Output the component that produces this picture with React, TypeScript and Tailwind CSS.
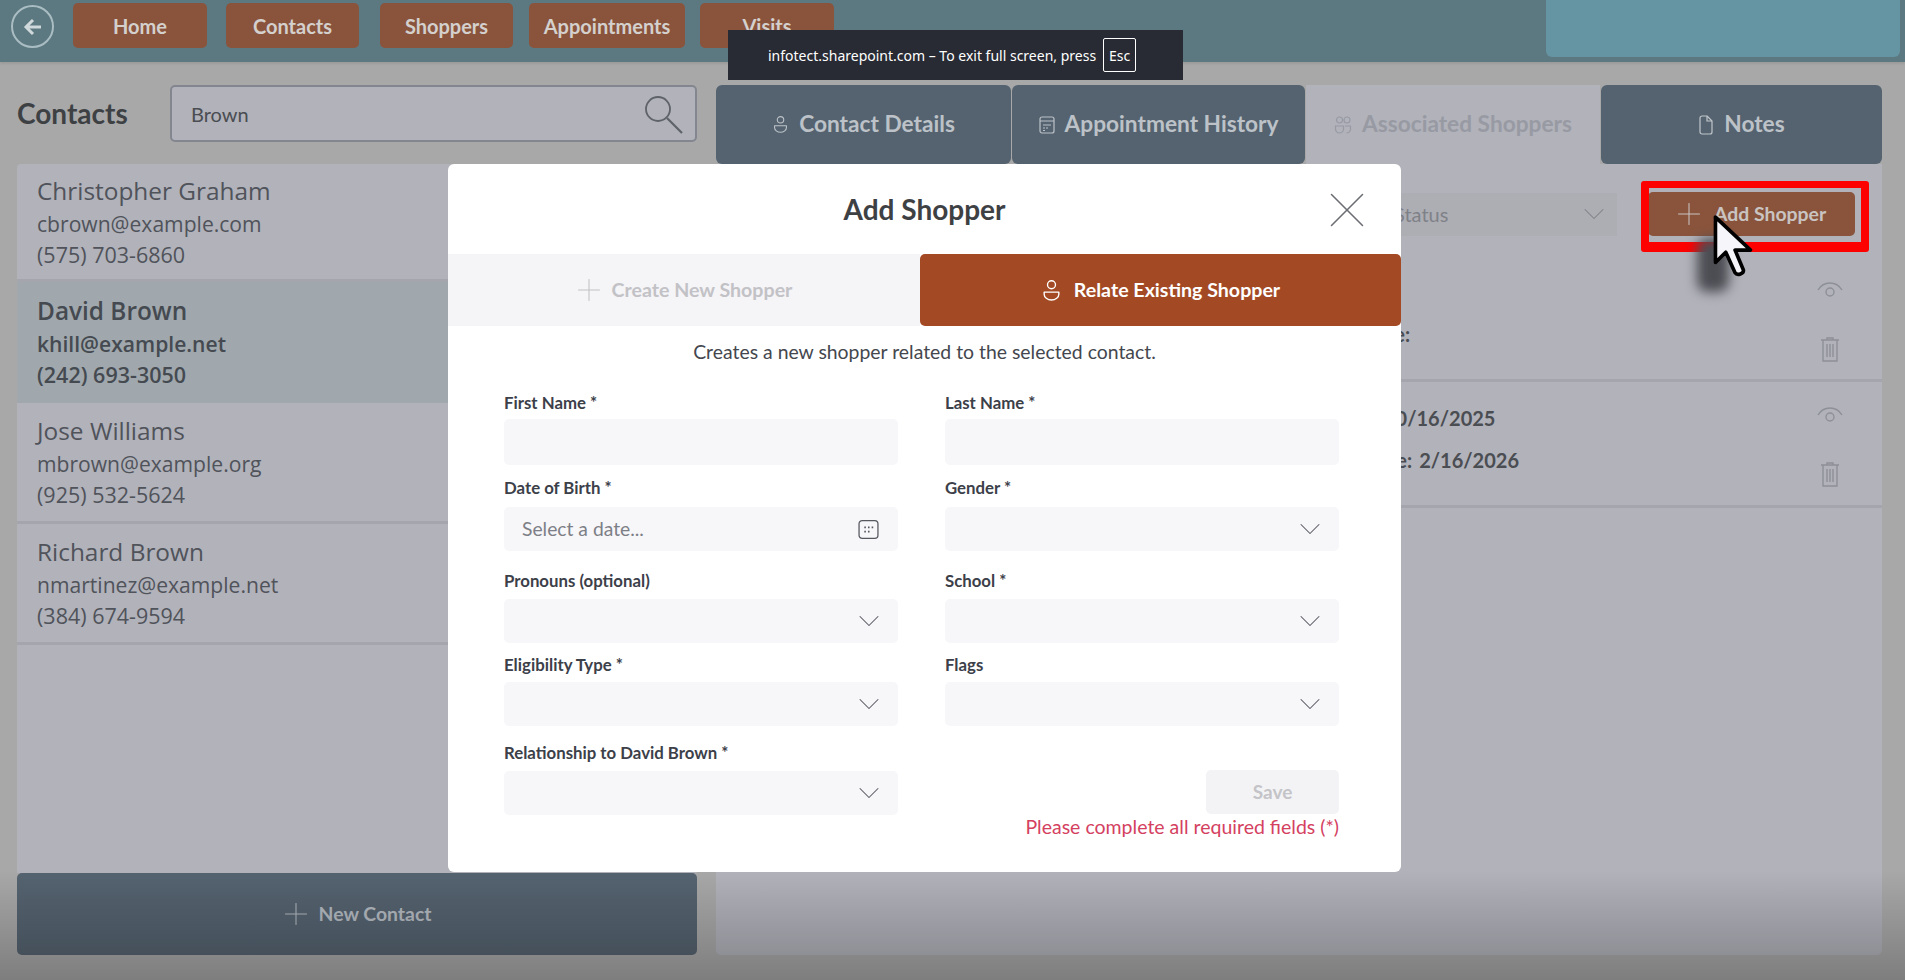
import { ChevronDown, Plus, X } from "lucide-react";

const navItems = [
  { label: "Home", cls: "w-[134px] ml-[19px]" },
  { label: "Contacts", cls: "w-[133px] ml-[19px]" },
  { label: "Shoppers", cls: "w-[133px] ml-[21px]" },
  { label: "Appointments", cls: "w-[156px] ml-[16px]" },
  { label: "Visits", cls: "w-[134px] ml-[15px]" },
];

const contacts = [
  { name: "Christopher Graham", email: "cbrown@example.com", phone: "(575) 703-6860", pad: "pt-[10px] h-[118px]" },
  { name: "David Brown", email: "khill@example.net", phone: "(242) 693-3050", pad: "pt-[12px] h-[121px]", selected: true },
  { name: "Jose Williams", email: "mbrown@example.org", phone: "(925) 532-5624", pad: "pt-[11px] h-[121px]" },
  { name: "Richard Brown", email: "nmartinez@example.net", phone: "(384) 674-9594", pad: "pt-[11px] h-[121px]" },
];

const PersonIcon = ({ className }: { className: string }) => (
  <svg viewBox="0 0 20 20" fill="none" stroke="currentColor" strokeWidth="1.3" className={className}>
    <circle cx="10" cy="4.5" r="3.8" />
    <path d="M3 11.5h14v2a7 5.6 0 0 1-14 0z" strokeLinejoin="round" />
  </svg>
);

const HistoryIcon = () => (
  <svg viewBox="0 0 16 18" fill="none" stroke="currentColor" strokeWidth="1.2" className="w-[16px] h-[18px]">
    <rect x="1" y="1" width="14" height="16" rx="2" />
    <path d="M1 5h14M4 9h8M4 12h2M7 12h2M4 14.5h2" />
  </svg>
);

const ShoppersIcon = () => (
  <svg viewBox="0 0 18 20" fill="none" stroke="currentColor" strokeWidth="1.2" className="w-[18px] h-[20px]">
    <circle cx="5.5" cy="5" r="3" />
    <circle cx="13" cy="5" r="3" />
    <path d="M1.5 11h8v3a4 4 0 0 1-8 0z" />
    <path d="M11 11h5.5v3a4 4 0 0 1-4 4" />
  </svg>
);

const PageIcon = () => (
  <svg viewBox="0 0 16 20" fill="none" stroke="#c0c5ca" strokeWidth="1.2" className="w-[16px] h-[20px]">
    <path d="M2 3a2 2 0 0 1 2-2h5l5 5v11a2 2 0 0 1-2 2H4a2 2 0 0 1-2-2z" strokeLinejoin="round" />
    <path d="M9 1v5h5" />
  </svg>
);

const EyeIcon = () => (
  <svg viewBox="0 0 26 18" fill="none" stroke="#8e9097" strokeWidth="1.4" className="w-[26px] h-[18px]">
    <path d="M1 9C4 4 8 2 13 2s9 2 12 7" />
    <circle cx="13" cy="11" r="4" />
  </svg>
);

const TrashIcon = () => (
  <svg viewBox="0 0 20 26" fill="none" stroke="#8e9097" strokeWidth="1.4" className="w-[20px] h-[26px]">
    <path d="M1 4h18M7 4V2h6v2M3 4v21h14V4M7 8v13M10 8v13M13 8v13" />
  </svg>
);

const CalendarIcon = () => (
  <svg viewBox="0 0 20 20" fill="none" stroke="#55585f" strokeWidth="1.2" className="w-[21px] h-[21px]">
    <rect x="1" y="1.5" width="18" height="17" rx="3" />
    <path d="M6 8h1.5M9.5 8H11M13 8h1.5M6 12h1.5M9.5 12H11" strokeWidth="1.8" />
  </svg>
);

const SearchIcon = () => (
  <svg viewBox="0 0 40 40" fill="none" stroke="#5f6268" strokeWidth="1.8" className="w-[40px] h-[40px]">
    <circle cx="15" cy="15" r="12" />
    <path d="M24 24l15 15" strokeWidth="2.2" />
  </svg>
);

const FieldLabel = ({ label }: { label: string }) => (
  <div className="text-[16.8px] leading-[20px] font-bold text-[#3c4049]">{label}</div>
);

const SelectBox = () => (
  <div className="h-[44px] rounded-[5px] bg-[#f7f6f9] flex items-center justify-end pr-[11px]">
    <ChevronDown className="w-[36px] h-[36px] text-[#55585f]" strokeWidth={0.7} />
  </div>
);

const App = () => {
  return (
    <div className="relative w-[1905px] h-[980px] overflow-hidden bg-[#a8a8a9] font-['Lato','Liberation_Sans',sans-serif]">
      {/* top bar */}
      <div className="h-[62px] bg-[#5c7881] flex items-start shadow-[0_2px_2px_rgba(0,0,0,0.08)]">
        <div className="ml-[11px] mt-[5px] w-[43px] h-[43px] rounded-full border-2 border-[#a9bdc3] flex items-center justify-center">
          <svg viewBox="0 0 20 20" className="w-[20px] h-[20px]" fill="none" stroke="#cfd8da" strokeWidth="3">
            <path d="M18 10H4M10 3l-7 7 7 7" />
          </svg>
        </div>
        <div className="flex mt-[3px]">
          {navItems.map((item) => (
            <div
              key={item.label}
              className={`${item.cls} h-[45px] rounded-[5px] bg-[#8a543c] text-[#d4d0cd] text-[20px] font-bold flex items-center justify-center`}
            >
              {item.label}
            </div>
          ))}
        </div>
        <div className="ml-auto mr-[5px] w-[354px] h-[57px] rounded-b-[6px] bg-[#6594a2]" />
      </div>

      {/* main */}
      <div className="flex pl-[17px] pt-[23px] gap-[19px]">
        <div className="w-[680px]">
          <div className="h-[57px] flex items-center">
            <h1 className="w-[153px] text-[28px] font-bold text-[#3e4144] -mt-[2px]">Contacts</h1>
            <div className="w-[527px] h-[57px] rounded-[5px] border-2 border-[#83858f] bg-[#b1b2ba] flex items-center justify-between pl-[19px] pr-[12px] text-[20px] text-[#4a4d52]">
              <span>Brown</span>
              <SearchIcon />
            </div>
          </div>
          <div className="mt-[22px] h-[709px] rounded-t-[4px] bg-[#b1b2ba] font-['Open_Sans','Liberation_Sans',sans-serif]">
            {contacts.map((c) => (
              <div
                key={c.name}
                className={`${c.pad} pl-[20px] border-b-[3px] ${c.selected ? "bg-[#a0a8ad] border-[#a0a8ad] text-[#454a51] font-semibold" : "border-[#a4a5ad] text-[#50535a]"}`}
              >
                <div className="text-[24.4px] leading-[33px]">{c.name}</div>
                <div className="text-[21.1px] leading-[30px] mt-[2px]">{c.email}</div>
                <div className="text-[21.5px] leading-[30px] mt-[1px]">{c.phone}</div>
              </div>
            ))}
          </div>
          <div className="h-[82px] rounded-[5px] bg-[#556370] flex items-center justify-center gap-[5px] pr-[5px] text-[19.4px] font-bold text-[#b4bac0]">
            <Plus className="w-[36px] h-[36px]" strokeWidth={0.7} />
            New Contact
          </div>
        </div>

        <div className="w-[1166px]">
          <div className="flex h-[79px] gap-[1px] text-[22.7px] font-bold">
            <div className="w-[295px] rounded-[6px] bg-[#556370] text-[#bcc2c7] flex items-center justify-center gap-[10px]">
              <PersonIcon className="w-[17px] h-[17px]" />
              Contact Details
            </div>
            <div className="w-[293px] rounded-[6px] bg-[#556370] text-[#bcc2c7] flex items-center justify-center gap-[10px]">
              <HistoryIcon />
              Appointment History
            </div>
            <div className="w-[294px] bg-[#b1b2ba] text-[#989aa3] flex items-center justify-center gap-[10px]">
              <ShoppersIcon />
              Associated Shoppers
            </div>
            <div className="w-[281px] rounded-[6px] bg-[#556370] text-[#bcc2c7] flex items-center justify-center gap-[10px]">
              <PageIcon />
              Notes
            </div>
          </div>
          <div className="h-[791px] rounded-b-[5px] bg-[#b1b2ba]">
            {/* first shopper row, holds filter + add button */}
            <div className="h-[218px] border-b-[3px] border-[#a4a5ad] relative">
              <div className="flex pt-[28px] items-center">
                <div className="ml-[659px] w-[242px] h-[43px] bg-[#adaeb4] flex items-center justify-between pl-[19px] pr-[5px] text-[20px] text-[#7f8188]">
                  <span>Status</span>
                  <ChevronDown className="w-[36px] h-[36px]" strokeWidth={0.7} />
                </div>
                <div className="ml-[31px] w-[207px] h-[44px] rounded-[5px] bg-[#8a543c] text-[#c9c4c2] text-[19.4px] font-bold flex items-center pl-[23px] gap-[7px]">
                  <Plus className="w-[36px] h-[36px]" strokeWidth={0.7} />
                  Add Shopper
                </div>
              </div>
              <div className="absolute left-[646px] top-[158px] text-[20px] font-bold leading-[24px] text-[#4a4d52]">Date:</div>
              <div className="absolute right-[39px] top-[117px] flex flex-col items-center gap-[37px]">
                <EyeIcon />
                <TrashIcon />
              </div>
            </div>
            <div className="h-[126px] border-b-[3px] border-[#a4a5ad] relative">
              <div className="absolute left-[668px] top-[24px] text-[20px] font-bold leading-[24px] text-[#4a4d52]">10/16/2025</div>
              <div className="absolute left-[648px] top-[66px] text-[20px] font-bold leading-[24px] text-[#4a4d52]">
                Date:<span className="ml-[7px]">2/16/2026</span>
              </div>
              <div className="absolute right-[39px] top-[24px] flex flex-col items-center gap-[37px]">
                <EyeIcon />
                <TrashIcon />
              </div>
            </div>
          </div>
        </div>
      </div>

      {/* video-controls shade along the bottom */}
      <div className="absolute left-0 right-0 bottom-0 h-[110px] bg-gradient-to-b from-transparent to-[rgba(0,0,0,0.25)]" />

      {/* red highlight around Add Shopper */}
      <div className="absolute left-[1641px] top-[181px] w-[228px] h-[71px] rounded-[3px] border-[8px] border-b-[10px] border-t-[7px] border-[#fd0000]" />

      {/* cursor */}
      <div className="absolute left-[1697px] top-[238px] w-[32px] h-[54px] rounded-[10px] bg-[#4c4d53] blur-[6px]" />
      <svg viewBox="0 0 40 64" className="absolute left-[1712px] top-[214px] w-[42px] h-[66px]">
        <path
          d="M3 3v44l10-10 9 20c2 3 9 1 8-3l-8-19h15z"
          fill="#f6f6fa"
          stroke="#000"
          strokeWidth="3.5"
          strokeLinejoin="round"
        />
      </svg>

      {/* modal */}
      <div className="absolute left-[448px] top-[164px] w-[953px] h-[708px] rounded-[6px] bg-white overflow-hidden">
        <div className="h-[90px] flex items-center justify-center relative">
          <h2 className="text-[28px] font-bold text-[#3e4144]">Add Shopper</h2>
          <X className="absolute right-[23px] top-[15px] w-[62px] h-[62px] text-[#6b6d72]" strokeWidth={0.6} />
        </div>
        <div className="flex h-[72px]">
          <div className="w-[472px] bg-[#f5f4f7] text-[#c2c2c6] text-[19.6px] font-bold flex items-center justify-center gap-[5px] pr-[5px]">
            <Plus className="w-[36px] h-[36px]" strokeWidth={0.7} />
            Create New Shopper
          </div>
          <div className="w-[481px] rounded-[5px] bg-[#a34a24] text-white text-[19.6px] font-bold flex items-center justify-center gap-[12px]">
            <PersonIcon className="w-[21px] h-[21px]" />
            Relate Existing Shopper
          </div>
        </div>
        <p className="text-center text-[19.4px] leading-[24px] mt-[14px] text-[#44474e]">
          Creates a new shopper related to the selected contact.
        </p>

        <div className="grid grid-cols-[394px_394px] gap-x-[47px] pl-[56px] mt-[29px]">
          <div>
            <FieldLabel label="First Name *" />
            <div className="mt-[6px] h-[46px] rounded-[5px] bg-[#f7f6f9]" />
          </div>
          <div>
            <FieldLabel label="Last Name *" />
            <div className="mt-[6px] h-[46px] rounded-[5px] bg-[#f7f6f9]" />
          </div>
          <div className="mt-[13px]">
            <FieldLabel label="Date of Birth *" />
            <div className="mt-[9px] h-[44px] rounded-[5px] bg-[#f7f6f9] flex items-center justify-between pl-[18px] pr-[19px] text-[19.3px] text-[#7d7f86]">
              <span>Select a date...</span>
              <CalendarIcon />
            </div>
          </div>
          <div className="mt-[13px]">
            <FieldLabel label="Gender *" />
            <div className="mt-[9px]"><SelectBox /></div>
          </div>
          <div className="mt-[20px]">
            <FieldLabel label="Pronouns (optional)" />
            <div className="mt-[8px]"><SelectBox /></div>
          </div>
          <div className="mt-[20px]">
            <FieldLabel label="School *" />
            <div className="mt-[8px]"><SelectBox /></div>
          </div>
          <div className="mt-[12px]">
            <FieldLabel label="Eligibility Type *" />
            <div className="mt-[7px]"><SelectBox /></div>
          </div>
          <div className="mt-[12px]">
            <FieldLabel label="Flags" />
            <div className="mt-[7px]"><SelectBox /></div>
          </div>
          <div className="mt-[17px]">
            <FieldLabel label="Relationship to David Brown *" />
            <div className="mt-[8px]"><SelectBox /></div>
          </div>
          <div className="mt-[44px] flex flex-col items-end">
            <div className="w-[133px] h-[44px] rounded-[5px] bg-[#f3f3f5] text-[#c4c4c8] text-[19px] font-bold flex items-center justify-center">
              Save
            </div>
            <div className="mt-[1px] text-[19.5px] leading-[24px] text-[#d4415f]">Please complete all required fields (*)</div>
          </div>
        </div>
      </div>

      {/* full screen notice */}
      <div className="absolute left-[728px] top-[30px] w-[455px] h-[50px] bg-[#282b33] flex items-center pl-[40px] text-[14px] text-white font-['Noto_Sans','Liberation_Sans',sans-serif]">
        <span>infotect.sharepoint.com – To exit full screen, press</span>
        <span className="ml-[7px] w-[33px] h-[34px] rounded-[2px] border border-white flex items-center justify-center">Esc</span>
      </div>
    </div>
  );
};

export default App;
